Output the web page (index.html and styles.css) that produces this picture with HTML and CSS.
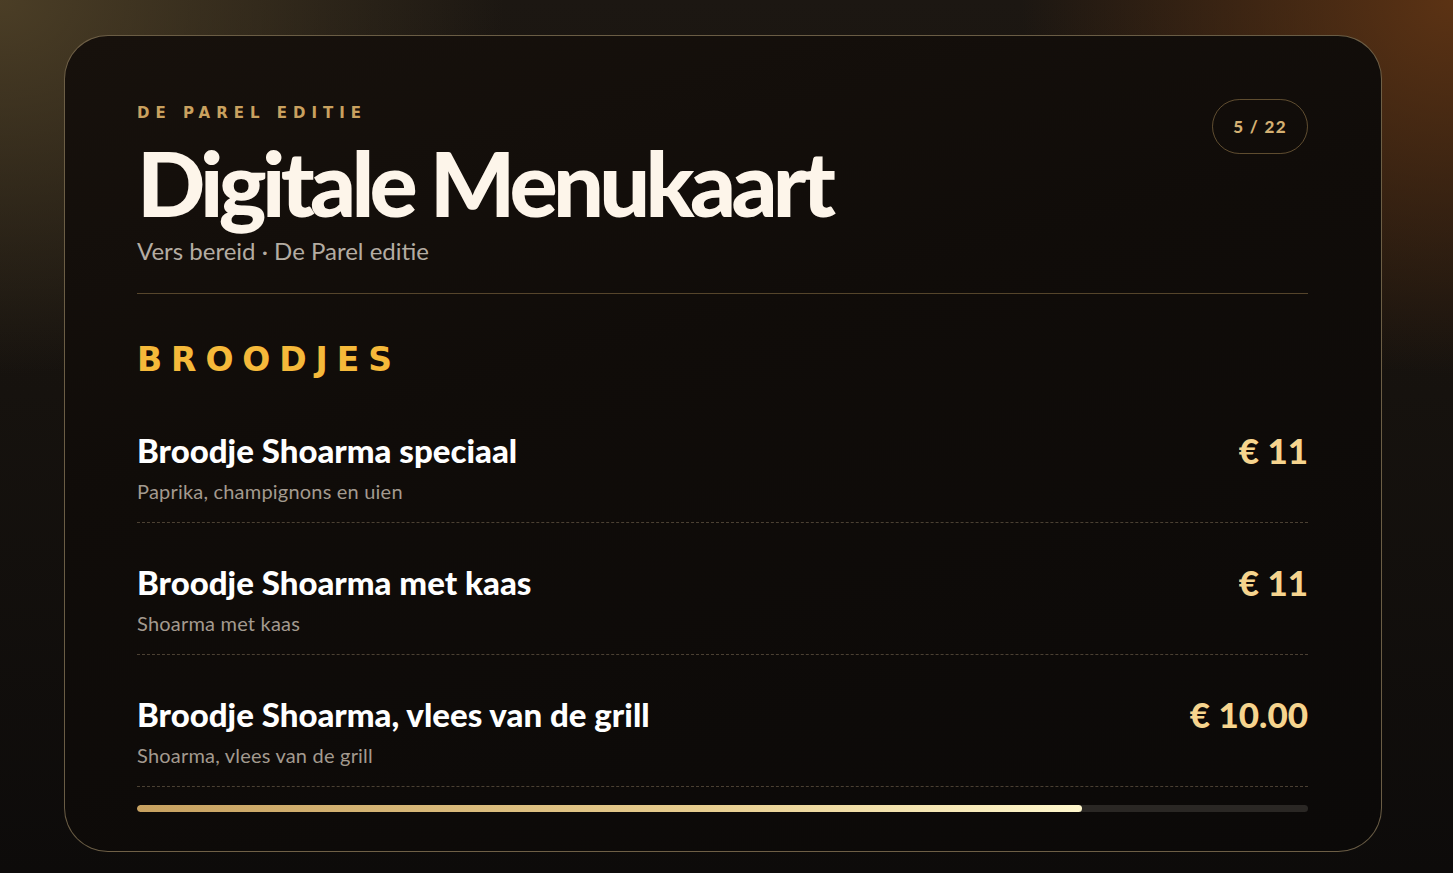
FILE: index.html
```html
<!DOCTYPE html>
<html lang="nl">
<head>
<meta charset="utf-8">
<title>Digitale Menukaart</title>
<link rel="stylesheet" href="styles.css">
</head>
<body>
<main class="stage">
  <section class="card">
    <header class="head">
      <div class="head-text">
        <div class="eyebrow">DE PAREL EDITIE</div>
        <h1 class="title">Digitale Menukaart</h1>
        <div class="subtitle">Vers bereid · De Parel editie</div>
      </div>
      <div class="pager">5 / 22</div>
    </header>
    <div class="divider"></div>
    <h2 class="section">BROODJES</h2>
    <ul class="items">
      <li class="item">
        <div class="item-text">
          <div class="item-name">Broodje Shoarma speciaal</div>
          <div class="item-desc">Paprika, champignons en uien</div>
        </div>
        <div class="price">€ 11</div>
      </li>
      <li class="item">
        <div class="item-text">
          <div class="item-name">Broodje Shoarma met kaas</div>
          <div class="item-desc">Shoarma met kaas</div>
        </div>
        <div class="price">€ 11</div>
      </li>
      <li class="item">
        <div class="item-text">
          <div class="item-name">Broodje Shoarma, vlees van de grill</div>
          <div class="item-desc">Shoarma, vlees van de grill</div>
        </div>
        <div class="price">€ 10.00</div>
      </li>
    </ul>
    <div class="progress"><div class="progress-fill" style="width:80.7%"></div></div>
  </section>
</main>
</body>
</html>
```
FILE: styles.css
```css
* { box-sizing: border-box; }
html, body { margin: 0; padding: 0; }
body {
  width: 1453px;
  height: 873px;
  overflow: hidden;
  font-family: "Lato", "Noto Sans", sans-serif;
  background:
    radial-gradient(ellipse 700px 520px at 0% 0%, rgba(80,66,40,0.9), rgba(80,66,40,0) 72%),
    radial-gradient(ellipse 600px 520px at 100% 0%, rgba(95,52,20,0.95), rgba(95,52,20,0) 72%),
    linear-gradient(180deg, #1c1712 0%, #16120e 45%, #0d0b0a 100%);
  color: #fff;
}
.stage {
  padding: 35px 71px 20px 64px;
}
.card {
  width: 1318px;
  height: 817px;
  border: 1px solid rgba(200,175,130,0.5);
  border-radius: 44px;
  background: linear-gradient(165deg, #17110c 0%, #100c09 40%, #0b0908 100%);
  padding: 64px 73px 38px 72px;
  display: flex;
  flex-direction: column;
}
.head {
  display: flex;
  justify-content: space-between;
  align-items: flex-start;
}
.eyebrow {
  font-family: "DejaVu Sans", sans-serif;
  font-weight: 700;
  font-size: 15px;
  letter-spacing: 0.4em;
  color: #c9a15f;
  line-height: 26px;
}
.title {
  margin: 8px 0 0;
  font-size: 90px;
  font-weight: 900;
  letter-spacing: -0.052em;
  line-height: 96px;
  color: #fdf5ea;
}
.subtitle {
  margin-top: 6px;
  font-size: 24px;
  color: #b4aca2;
  line-height: 30px;
}
.pager {
  margin-top: -1px;
  border: 1px solid rgba(190,155,95,0.45);
  border-radius: 28px;
  padding: 0 20px;
  height: 55px;
  line-height: 53px;
  font-size: 17px;
  font-weight: 900;
  letter-spacing: 0.08em;
  color: #d4b072;
}
.divider {
  height: 1px;
  margin-top: 27px;
  background: rgba(190,155,95,0.4);
}
.section {
  margin: 46px 0 0;
  font-family: "DejaVu Sans", sans-serif;
  font-weight: 700;
  font-size: 33px;
  letter-spacing: 0.27em;
  line-height: 40px;
  color: #f5b93a;
}
.items {
  list-style: none;
  margin: 50px 0 0;
  padding: 0;
}
.item {
  display: flex;
  justify-content: space-between;
  align-items: flex-start;
  border-bottom: 1px dashed rgba(150,130,105,0.45);
  padding: 39px 0 18px;
}
.item:first-child { padding-top: 0; }
.item-name {
  font-size: 33px;
  font-weight: 900;
  letter-spacing: 0;
  line-height: 40px;
  color: #ffffff;
}
.item-desc {
  margin-top: 8px;
  font-size: 20px;
  letter-spacing: 0.01em;
  color: #a39a8f;
  line-height: 26px;
}
.price {
  font-size: 35px;
  font-weight: 900;
  line-height: 40px;
  color: #f6d48e;
}
.progress {
  margin-top: 18px;
  height: 7px;
  border-radius: 4px;
  background: #2a2724;
  overflow: hidden;
}
.progress-fill {
  height: 100%;
  border-radius: 4px;
  background: linear-gradient(90deg, #c7a160 0%, #e7cd8f 60%, #fff7cc 100%);
}
```
